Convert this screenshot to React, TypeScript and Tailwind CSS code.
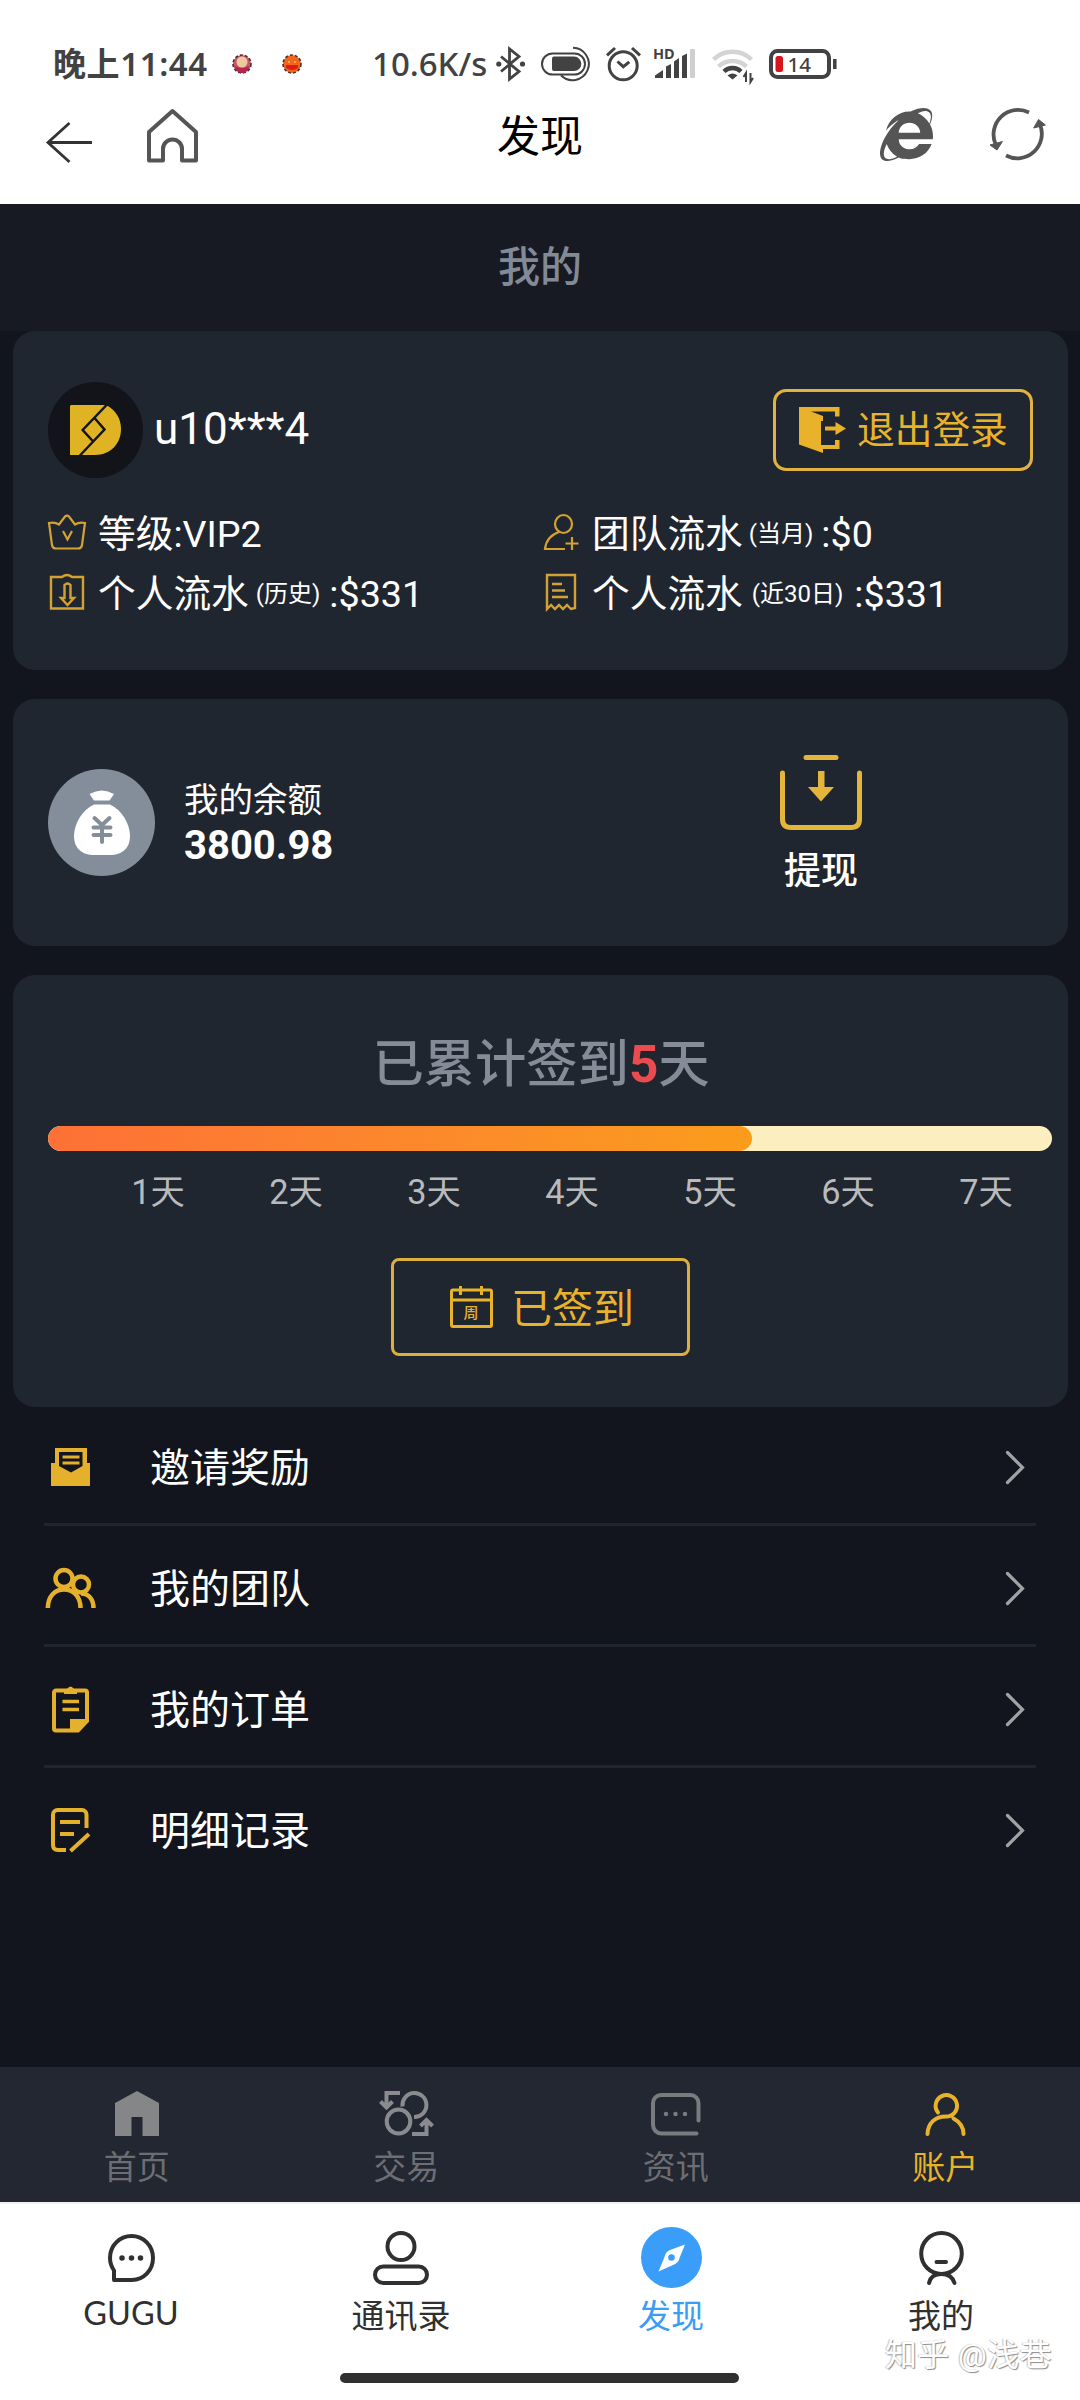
import { FaInternetExplorer } from "react-icons/fa";

interface IconProps {
  w: number;
  h: number;
  className?: string;
  strokeWidth?: number;
  children: React.ReactNode;
}

const Icon = ({ w, h, className = "", strokeWidth = 4, children }: IconProps) => (
  <svg
    width={w}
    height={h}
    viewBox={`0 0 ${w} ${h}`}
    fill="none"
    stroke="currentColor"
    strokeWidth={strokeWidth}
    className={`shrink-0 overflow-visible ${className}`}
  >
    {children}
  </svg>
);

const StatusBar = () => (
  <div className="flex h-[100px] items-center pt-7 pl-[53px] text-[#424242]">
    <span className="w-[179px] font-['Noto_Sans','Noto_Sans_CJK_SC',sans-serif] text-[33px] leading-[40px] font-semibold tracking-[0.6px] whitespace-nowrap">
      晚上11:44
    </span>
    <Icon w={20} h={20}>
      <circle cx="10" cy="10" r="9" fill="#c9566b" stroke="#4a3030" strokeWidth="1.6" strokeDasharray="3 2" />
      <circle cx="10" cy="8" r="5.5" fill="#f0c8a0" stroke="none" />
      <path d="M3 12q7 4 14 0a7 7 0 0 1-14 0z" fill="#b8234f" stroke="none" />
    </Icon>
    <Icon w={20} h={20} className="ml-[30px]">
      <circle cx="10" cy="10" r="9" fill="#f4661c" stroke="#4a3030" strokeWidth="1.6" strokeDasharray="3 2" />
      <path d="M4 11h12v3q-6 4-12 0z" fill="#e01b10" stroke="none" />
      <path d="M6 8h2M12 8h2" stroke="#ffc05a" strokeWidth="1.6" />
    </Icon>
    <span className="ml-[70px] w-[124px] font-['Noto_Sans',sans-serif] text-[33px] leading-[40px] font-medium whitespace-nowrap">
      10.6K/s
    </span>
    <Icon w={29} h={34} strokeWidth={2.8}>
      <path d="M5 9.5 23 24.5 13.5 32V2L23 9.5 5 24.5" />
      <circle cx="2.8" cy="17" r="2.6" fill="currentColor" stroke="none" />
      <circle cx="26.5" cy="17" r="2.6" fill="currentColor" stroke="none" />
    </Icon>
    <Icon w={49} h={34} strokeWidth={2} className="ml-4">
      <rect x="1" y="6.5" width="43" height="21" rx="10.5" />
      <path d="M13 9.5h20a7.3 7.3 0 0 1 0 14.6H13a2 2 0 0 1-2-2V11.5a2 2 0 0 1 2-2z" fill="currentColor" stroke="none" />
      <path d="M32 .8a16.2 16.2 0 1 1-12 27.5" />
    </Icon>
    <Icon w={35} h={34} strokeWidth={3} className="ml-4">
      <circle cx="17.2" cy="18.8" r="14" />
      <path d="m11.5 14.5 5.8 5.2 6-4.8M1 8.3 9 1M26 1l8 7.3" />
    </Icon>
    <Icon w={41} h={34} className="ml-[13px]">
      <g fill="currentColor" stroke="none">
        <text x="-1" y="11.5" fontSize="14.5" fontWeight="700" fontFamily="Noto Sans">
          HD
        </text>
        <path d="M1 31v-2.500L9 23v8zM12 31V19.500l5-2.500v14zM20 31V14.500l5-3.500v20zM28 31V9l5-2.500v24.500z" />
        <rect x="36" y="2" width="5" height="29" rx="1" fill="#cfcfcf" />
      </g>
    </Icon>
    <Icon w={41} h={34} strokeWidth={4.4} className="ml-[17px]">
      <path d="M1.5 12.5a27 27 0 0 1 38 0M6.5 19.5a20.500 20.500 0 0 1 28 0" stroke="#d4d4d4" />
      <path d="M12 24.5a12 12 0 0 1 17 0" />
      <path d="M15.5 28.5q5-4 10 0l-5 4z" fill="currentColor" stroke="none" />
      <path d="M34 35v-9l-2.500 4M38.500 26v9l2.500-4" strokeWidth="2" />
    </Icon>
    <Icon w={68} h={30} className="ml-4">
      <rect x="2" y="2" width="58" height="26" rx="6.5" />
      <rect x="6.5" y="7" width="7.5" height="16" rx="2.5" fill="#d8151f" stroke="none" />
      <path d="M65.8 10v10" strokeWidth="3.5" />
      <text x="18.5" y="22.7" fontSize="20.5" fill="currentColor" stroke="none" fontFamily="Noto Sans" fontWeight="500">
        14
      </text>
    </Icon>
  </div>
);

const BrowserBar = () => (
  <div className="grid h-[104px] grid-cols-[1fr_auto_1fr] items-start text-[#555]">
    <div className="flex pl-[46px]">
      <Icon w={46} h={41} strokeWidth={2.8} className="mt-[22px] text-[#333]">
        <path d="M23.5 1 2 20.5l21.5 19.500M2 20.500h44" />
      </Icon>
      <Icon w={51} h={54} className="mt-[9px] ml-[55px]">
        <path d="M2 23 25.5 2 49 23v28.500H35V40a9.500 9.500 0 0 0-19 0v11.500H2z" strokeLinejoin="round" />
      </Icon>
    </div>
    <h1 className="pt-[9px] text-[43px] leading-[56px] text-black">发现</h1>
    <div className="flex justify-end pt-2 pr-[34px]">
      <FaInternetExplorer className="mr-[57px] h-[53px] w-[53px]" />
      <Icon w={56} h={54} strokeWidth={3.8}>
        <path d="M39 4.5A24.5 24.5 0 0 0 5.5 36M16 47.5A24.5 24.5 0 0 0 50 16.5" />
        <path d="m0 37 12.400-3.500L7 42zM48.500 11.500 43.700 20l11.700-3z" fill="currentColor" strokeWidth="1" />
      </Icon>
    </div>
  </div>
);

interface StatProps {
  icon: React.ReactNode;
  label: string;
  note?: string;
  noteClass?: string;
  value: string;
}

const Stat = ({ icon, label, note, noteClass = "", value }: StatProps) => (
  <div className="flex h-[60px] items-center text-[37.7px] leading-[56px] whitespace-nowrap text-white">
    <div className="mr-[12px] flex w-[38px] justify-center">{icon}</div>
    <span className="pt-1">{label}</span>
    {note && <span className={`pt-1 text-[24px] ${noteClass}`}>{note}</span>}
    <span className="pt-[3px]">:{value}</span>
  </div>
);

const ProfileCard = () => (
  <section className="h-[339px] rounded-[22px] bg-[#20262f] px-[35px] pt-[51px]">
    <div className="flex h-[96px] items-center">
      <div className="flex h-[96px] w-[95px] items-center justify-center rounded-full bg-[#12141a]">
        <Icon w={51} h={50} strokeWidth={2.5} className="text-[#12141a]">
          <path d="M1 0h35c10 5 15 14 15 24 0 15-11 26-26 26H0V1z" fill="#e0b324" stroke="none" />
          <path d="M37.5-1 12.7 25l10 11M24.5 13l10 11.500-25.500 27" />
        </Icon>
      </div>
      <span className="mb-[3px] ml-[11px] text-[44px] leading-[60px] text-white">u10***4</span>
      <button className="mb-px ml-auto flex h-[82px] w-[260px] items-center rounded-[13px] border-[3px] border-[#e0b23f] pl-[23px] text-[#e8b32a]">
        <Icon w={47} h={46}>
          <g fill="currentColor" stroke="none">
            <path d="M0 0h40.500v9.500H36v-5H12L24 9v5h-2v24h14v-5h4.500v9H24v4L0 37.500z" />
            <path d="M26 19.5h10.500V15L47 21.500 36.500 28v-4.500H26z" />
          </g>
        </Icon>
        <span className="ml-[11px] pt-px text-[37.7px] leading-[50px] whitespace-nowrap">退出登录</span>
      </button>
    </div>
    <div className="mt-[24px] grid grid-cols-[494px_1fr]">
      <Stat
        icon={
          <Icon w={38} h={36} strokeWidth={2.2} className="text-[#d3a233]">
            <path d="M1 9q6-1 10 1.500l6-8q2-2 4 0l6 8q4-2.500 10-1.500l-3 22q-.5 3.500-4 3.500H8q-3.500 0-4-3.500zM15 17l4.500 8.500L24 17" />
          </Icon>
        }
        label="等级"
        value="VIP2"
      />
      <Stat
        icon={
          <Icon w={34} h={36} strokeWidth={2.2} className="text-[#d3a233]">
            <ellipse cx="19.5" cy="10" rx="8.5" ry="9" />
            <path d="M15 18C6 21 2 27 1 35h20M28 23v13M21.500 29.500h13" />
          </Icon>
        }
        label="团队流水"
        note="(当月)"
        noteClass="ml-[6px] mr-[8px]"
        value="$0"
      />
      <Stat
        icon={
          <Icon w={34} h={36} strokeWidth={2.4} className="text-[#d3a233]">
            <path d="M1 3h11q5-4 10 0h11v31.500H1zM14.500 11q3-3 6 0v13h3.500l-6.500 7-6.500-7h3.500z" />
          </Icon>
        }
        label="个人流水"
        note="(历史)"
        noteClass="ml-[7px] mr-[9px]"
        value="$331"
      />
      <Stat
        icon={
          <Icon w={30} h={36} strokeWidth={2.4} className="text-[#d3a233]">
            <path d="M1 1h28v33l-4 1-4-4-4 4-4-4-4 4-4-4-4 4zM6 10h10M6 16.500h13M6 23h16" />
          </Icon>
        }
        label="个人流水"
        note="(近30日)"
        noteClass="ml-[9px] mr-[11px]"
        value="$331"
      />
    </div>
  </section>
);

const BalanceCard = () => (
  <section className="flex h-[247px] items-start rounded-[22px] bg-[#20262f] pl-[35px]">
    <div className="mt-[70px] flex size-[107px] items-center justify-center rounded-full bg-[#838e9a]">
      <Icon w={56} h={65} className="text-white">
        <path d="M15.5 4Q28-3 40 4l-4.500 6.500H20z" fill="currentColor" stroke="none" />
        <path
          d="M20 14.5h16C48 20 56 34 56 46c0 14-10 19-20 19H20C10 65 0 60 0 46c0-12 8-26 20-31.500z"
          fill="currentColor"
          stroke="none"
        />
        <path d="m20.500 28 7.500 7 7.500-7M28 35v17M19.500 37.500h17M19.500 45h17" stroke="#838e9a" strokeLinecap="round" />
      </Icon>
    </div>
    <div className="mt-[80px] ml-[29px] w-[148px] text-white">
      <p className="text-[34.5px] leading-[43px]">我的余额</p>
      <p className="text-[40px] leading-[47px] font-bold">3800.98</p>
    </div>
    <div className="mt-[56px] ml-[448px] flex flex-col items-center">
      <Icon w={82} h={75} strokeWidth={5} className="text-[#e3b53a]">
        <path d="M26 2.5h30M2.5 18v46q0 8.500 8.500 8.500h60q8.500 0 8.500-8.500V18" strokeLinecap="round" />
        <path d="M38 16h6.500v16H54L41 46.500 28 32h10z" fill="currentColor" stroke="none" />
      </Icon>
      <span className="mt-[17px] text-[37px] leading-[50px] font-medium text-white">提现</span>
    </div>
  </section>
);

const days = ["1天", "2天", "3天", "4天", "5天", "6天", "7天"];

const CheckInCard = () => (
  <section className="h-[432px] rounded-[22px] bg-[#20262f] pl-[35px]">
    <h2 className="pt-[60px] pr-[34px] text-center text-[51.3px] leading-[60px] font-medium text-[#848c98]">
      已累计签到<span className="font-bold text-[#ea4b4f]">5</span>天
    </h2>
    <div className="mt-[31px] h-[25px] w-[1004px] overflow-hidden rounded-full bg-[#fdeec0]">
      <div className="h-full w-[704px] rounded-full bg-linear-to-r from-[#fd7036] to-[#fb9c1b]" />
    </div>
    <div className="mt-[19px] ml-[41px] flex text-[34.3px] leading-[44px] text-[#b9babc]">
      {days.map((day) => (
        <span key={day} className="w-[138px] text-center">
          {day}
        </span>
      ))}
    </div>
    <button className="mt-[44px] ml-[343px] flex h-[98px] w-[299px] items-center rounded-lg border-[3px] border-[#dcb03f] pl-[56px] text-[#e8b32a]">
      <Icon w={43} h={42} strokeWidth={3}>
        <rect x="1.5" y="4" width="40" height="36.5" rx="1.5" />
        <path d="M2 14h39M10.500 0v9M31.500 0v9" />
        <text x="13.5" y="32" fontSize="15" fill="currentColor" stroke="none" fontFamily="Noto Sans CJK SC" fontWeight="500">
          周
        </text>
      </Icon>
      <span className="ml-[18px] pt-[3px] text-[41px] leading-[54px] whitespace-nowrap">已签到</span>
    </button>
  </section>
);

const menuItems = [
  {
    title: "邀请奖励",
    icon: (
      <Icon w={39} h={38} strokeWidth={3}>
        <path d="M4 0h32v15h3v23H0V15h4zM8 4v14l12 6.500L31.500 18V4z" fill="currentColor" fillRule="evenodd" stroke="none" />
        <path d="M11.5 9h17M11.5 15h17" />
      </Icon>
    ),
  },
  {
    title: "我的团队",
    icon: (
      <Icon w={51} h={40} strokeWidth={4.5}>
        <circle cx="19" cy="10.5" r="8.5" />
        <circle cx="36" cy="16.5" r="8" />
        <path d="M2.8 40C3 28 10 21.5 19 21.5S35.5 28 35.5 40M36 25.5c8 0 12.500 6 12.500 14.500" />
      </Icon>
    ),
  },
  {
    title: "我的订单",
    icon: (
      <Icon w={37} h={46} strokeWidth={4}>
        <path d="M4 4.5h29a2 2 0 0 1 2 2V35l-9 9.500H4a2 2 0 0 1-2-2v-36a2 2 0 0 1 2-2z" />
        <path d="M12 3h3q3.500-5 7 0h3v5H12zM18 33h17l-9 11.500h-8z" fill="currentColor" stroke="none" />
        <path d="M10.5 15.5h16.500M10.5 23.5h16.500" strokeWidth="3.5" />
      </Icon>
    ),
  },
  {
    title: "明细记录",
    icon: (
      <Icon w={39} h={44} strokeWidth={4}>
        <path d="M35.5 20V6.5A4.5 4.5 0 0 0 31 2H6.5A4.5 4.5 0 0 0 2 6.5V37q0 5 5 5h8M9 14h20M9 26h14M19.500 43 38 26" />
      </Icon>
    ),
  },
];

const Menu = () => (
  <ul className="-mt-[2px] px-[44px]">
    {menuItems.map(({ title, icon }) => (
      <li
        key={title}
        className="flex h-[121px] items-center border-b-[3px] border-[#20252e] pt-[6px] last:border-transparent"
      >
        <div className="flex w-[53px] justify-center text-[#e5b12c]">{icon}</div>
        <span className="ml-[53px] pt-[3px] text-[40px] leading-[60px] text-white">{title}</span>
        <Icon w={18} h={33} strokeWidth={3.2} className="mr-[12px] ml-auto text-[#a1a2a5]">
          <path d="m1.5 1.5 15 15-15 15" strokeLinecap="round" />
        </Icon>
      </li>
    ))}
  </ul>
);

const TabBar = () => (
  <nav className="grid h-[135px] grid-cols-4 bg-[#222732] pl-[2px] text-[33px] leading-[44px] text-[#6c6e72]">
    <div className="flex flex-col items-center pt-6">
      <Icon w={44} h={45} className="text-[#858687]">
        <path d="M0 12 22 0l22 12v33H27.500V26h-11v19H0z" fill="currentColor" stroke="none" />
      </Icon>
      <span className="mt-[10px]">首页</span>
    </div>
    <div className="flex flex-col items-center pt-6">
      <Icon w={54} h={45} className="text-[#8a8b8e]">
        <ellipse cx="19.5" cy="30.5" rx="11.8" ry="12" />
        <path d="M23.5 15.5A12 12 0 1 1 35 26M21 2H7.500v14M1.500 10.500l6 6 6-6M33 43h14.500V30M41.500 35l6-6 6 6" />
      </Icon>
      <span className="mt-[10px]">交易</span>
    </div>
    <div className="flex flex-col items-center pt-[26px]">
      <Icon w={50} h={43} className="text-[#7a7b7f]">
        <path
          d="M47.5 27.5V10a8 8 0 0 0-8-8H10a8 8 0 0 0-8 8v22a8.500 8.500 0 0 0 8.500 8.500H45.500"
          strokeLinecap="round"
        />
        <path d="M15 21h0M24.5 21h0M34 21h0" strokeLinecap="round" strokeWidth="4.5" />
      </Icon>
      <span className="mt-[10px]">资讯</span>
    </div>
    <div className="flex flex-col items-center pt-[26px] text-[#e8b32a]">
      <Icon w={41} h={43}>
        <path
          d="M13 19.5A10.7 10.7 0 1 1 21 23.5C10 23.5 3 30 2.5 41M28.5 25.5C35 29 38.5 34 38.5 41"
          strokeLinecap="round"
        />
      </Icon>
      <span className="mt-[10px]">账户</span>
    </div>
  </nav>
);

const BottomNav = () => (
  <footer className="relative h-[198px] bg-white">
    <div className="h-[2px] bg-[#f0f0f3]" />
    <nav className="mr-[4px] -ml-[4px] grid grid-cols-4 text-[33px] leading-[44px] text-[#303030]">
      <div className="flex flex-col items-center pt-[30px]">
        <Icon w={47} h={48}>
          <path
            d="M6 46V36.5C3 32 2 28 2 24 2 11.5 11.5 2 23.5 2S45 11.5 45 24 35.5 46 24 46z"
            strokeLinejoin="round"
          />
          <path d="M14 24h0M23.5 24h0M32.5 24h0" strokeLinecap="round" strokeWidth="5.5" />
        </Icon>
        <span className="mt-[9px] font-[Lato,sans-serif] text-[32.5px]">GUGU</span>
      </div>
      <div className="flex flex-col items-center pt-[27px]">
        <Icon w={56} h={54}>
          <circle cx="28" cy="15.5" r="13.5" />
          <rect x="2" y="35.5" width="52" height="16.5" rx="8.2" />
        </Icon>
        <span className="mt-[10px]">通讯录</span>
      </div>
      <div className="flex flex-col items-center pt-[23px] text-[#3a9cf5]">
        <Icon w={61} h={61}>
          <circle cx="30.5" cy="30.5" r="30.5" fill="#3a9dfa" stroke="none" />
          <path
            d="m44 17.5-15 5.500c-3 1.500-4.500 3-5.500 7l-6 14.500L32 38c4-1.500 6-4 6.500-7z"
            fill="white"
            stroke="none"
          />
          <circle cx="30.5" cy="30.5" r="3.3" fill="#3a9dfa" stroke="none" />
        </Icon>
        <span className="mt-[7px]">发现</span>
      </div>
      <div className="flex flex-col items-center pt-[27px]">
        <Icon w={45} h={54}>
          <ellipse cx="22.5" cy="22.5" rx="20.3" ry="20.5" />
          <path d="M17.5 31h9.500M10 52c1-5 5-9 12.500-9S34 47 35.500 52" strokeLinecap="round" />
        </Icon>
        <span className="mt-[10px]">我的</span>
      </div>
    </nav>
    <div className="absolute top-[171px] left-[340px] h-[10px] w-[399px] rounded-full bg-[#303030]" />
    <span className="absolute top-[131px] right-[28px] text-[32px] leading-[44px] tracking-[0.4px] whitespace-nowrap text-white [text-shadow:1px_1px_1px_#8a8a8a,-1px_0_1px_#c4c4c4]">
      知乎 @浅巷
    </span>
  </footer>
);

const App = () => (
  <div className="flex h-[2400px] w-[1080px] flex-col overflow-hidden bg-[#12151d] font-[Roboto,'Noto_Sans_CJK_SC',sans-serif]">
    <header className="bg-white">
      <StatusBar />
      <BrowserBar />
    </header>
    <div className="h-[127px] bg-[#181a23] pt-[34px] text-center text-[42px] leading-[60px] font-medium text-[#828a98]">
      我的
    </div>
    <main className="flex-1">
      <div className="flex flex-col gap-[29px] pr-3 pl-[13px]">
        <ProfileCard />
        <BalanceCard />
        <CheckInCard />
      </div>
      <Menu />
    </main>
    <TabBar />
    <BottomNav />
  </div>
);

export default App;
